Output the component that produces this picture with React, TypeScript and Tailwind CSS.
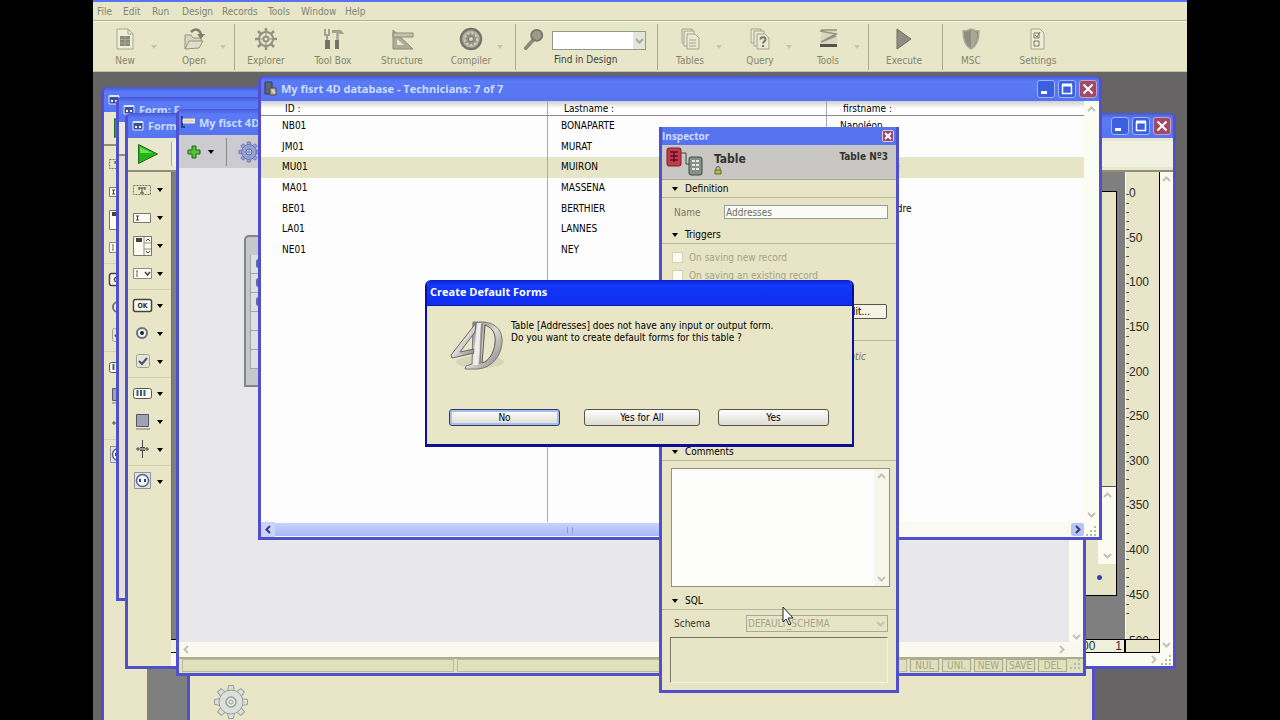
import type { ReactNode } from "react";
import clsx from "clsx";

const Caret = ({ className }: { className?: string }) => (
  <svg viewBox="0 0 6 4" className={clsx("h-[4px] w-[6px] shrink-0", className ?? "fill-black")}>
    <path d="M0 0H6L3 4Z" />
  </svg>
);

const Chevron = ({ dir, className }: { dir: "up" | "down" | "left" | "right"; className?: string }) => {
  const paths = {
    up: "M1 6L4.500 2.500L8 6",
    down: "M1 3L4.500 6.500L8 3",
    left: "M6 1L2.500 4.500L6 8",
    right: "M3 1L6.500 4.500L3 8"
  };
  return (
    <svg viewBox="0 0 9 9" className={clsx("size-[9px] shrink-0 fill-none stroke-2", className ?? "stroke-[#c3c4b0]")}>
      <path d={paths[dir]} />
    </svg>
  );
};

const Grip = () => (
  <svg viewBox="0 0 11 11" className="size-[11px] fill-[#bdbc9e]">
    <path d="M8 0h2v2h-2zM8 4h2v2h-2zM4 4h2v2h-2zM8 8h2v2h-2zM4 8h2v2h-2zM0 8h2v2h-2z" />
  </svg>
);

const teeth = [0, 45, 90, 135, 180, 225, 270, 315];

const Gear = ({ className, color, fill, hole }: { className: string; color: string; fill: string; hole: string }) => (
  <svg viewBox="0 0 36 36" className={className} fill={fill} stroke={color}>
    {teeth.map((angle) => (
      <path key={angle} d="M14.500 8L15.500 1.500h5L21.500 8z" transform={`rotate(${angle} 18 18)`} />
    ))}
    <circle cx="18" cy="18" r="12" />
    <circle cx="18" cy="18" r="10.500" stroke="none" />
    <circle cx="18" cy="18" r="5" fill={hole} strokeWidth="1.500" />
    <circle cx="18" cy="18" r="2" fill="none" />
  </svg>
);

/* ---------- main toolbar ---------- */

const toolIcons: Record<string, ReactNode> = {
  New: (
    <>
      <path d="M4 2h11l5 5v15H4z" fill="#eeeed8" stroke="#a8a88c" />
      <path d="M15 2v5h5" fill="none" stroke="#a8a88c" />
      <path d="M7 9h10v10H7z" fill="#8b8b7c" />
      <path d="M7 12.500h10M7 16h10M12 9v10" stroke="#a9a999" />
    </>
  ),
  Open: (
    <>
      <path d="M3 22V8h6l2 3h8v3" fill="#d5d4bd" stroke="#96957f" />
      <path d="M3 22l4-8h14l-4 7z" fill="#dfdec8" stroke="#96957f" />
      <path d="M9 5c4-4 9-3 10 3" fill="none" stroke="#7f7e70" strokeWidth="2.500" />
      <path d="M15 7h8l-4 5z" fill="#7f7e70" />
    </>
  ),
  Explorer: (
    <g fill="none" stroke="#929281">
      <circle cx="12" cy="12" r="7" strokeWidth="2" />
      <circle cx="12" cy="12" r="2.500" strokeWidth="2" />
      <path d="M12 5V1M12 23v-4M5 12H1M23 12h-4M7 7L4 4M20 20l-3-3M17 7l3-3M4 20l3-3" strokeWidth="2.500" />
      <path d="M12 5v5M12 14v5M5 12h5M14 12h5" />
    </g>
  ),
  "Tool Box": (
    <>
      <path d="M4 2v6h4V2M6 8v6" fill="none" stroke="#a3a28e" strokeWidth="2" />
      <path d="M4 13h5v9H4z" fill="#74746a" />
      <path d="M11 3h9l3 4h-4l-1-1h-7z" fill="#a3a28e" />
      <path d="M15 6h3v7h-3z" fill="#b0af9b" />
      <path d="M14 13h4v9h-4z" fill="#74746a" />
    </>
  ),
  Structure: (
    <>
      <path d="M3 3v19h20z" fill="#adac98" stroke="#8a8a79" />
      <path d="M7 12v6h7z" fill="#e8e7c9" />
      <path d="M3 6h20v4H3z" fill="#c4c3ac" stroke="#8a8a79" />
    </>
  ),
  Compiler: (
    <>
      <circle cx="12" cy="12" r="10" fill="#b3b2a0" stroke="#75756a" strokeWidth="2.500" />
      <circle cx="12" cy="12" r="6" fill="#94938a" stroke="#d3d2bd" strokeDasharray="2 2" strokeWidth="2" />
      <circle cx="12" cy="12" r="2.500" fill="#d9d8c4" stroke="#75756a" />
    </>
  ),
  Tables: (
    <g fill="#e9e8d3" stroke="#a6a58f">
      <path d="M4 2h10v14H4z" />
      <path d="M6 4h10v15H6z" />
      <path d="M9 7h8l4 4v11H9z" />
      <path d="M11 13h7M11 16h7M11 19h7" />
    </g>
  ),
  Query: (
    <>
      <g fill="#e9e8d3" stroke="#a6a58f">
        <path d="M3 2h10v14H3z" />
        <path d="M6 4h10v15H6z" />
        <path d="M9 7h8l4 4v11H9z" />
      </g>
      <path d="M12.500 12.500c0-3 5-3 5 0 0 2-2.500 2-2.500 4M15 18v2" fill="none" stroke="#77766a" strokeWidth="2" />
    </>
  ),
  Tools: (
    <>
      <path d="M6 3h15v14H4z" fill="#d8d7c1" />
      <path d="M4 4l16 3-15 8M5 3h16M5 15L20 9" fill="none" stroke="#96957f" strokeWidth="1.500" />
      <path d="M4 17h17v3H4z" fill="#55554d" />
    </>
  ),
  Execute: <path d="M5 2l14 10L5 22z" fill="#8f8e7e" stroke="#6c6c60" />,
  MSC: (
    <>
      <path d="M4 4c3 0 6-1 8-2 2 1 5 2 8 2 0 9-2 15-8 18C6 19 4 13 4 4z" fill="#8d8d80" stroke="#aead99" strokeWidth="1.500" />
      <path d="M12 3v18c4-3 6-8 6-15z" fill="#a9a897" />
    </>
  ),
  Settings: (
    <>
      <path d="M5 2h9l4 4v16H5z" fill="#eeeed8" stroke="#a6a58f" />
      <path d="M8 6h5v5H8zM8 14h5v5H8z" fill="none" stroke="#77766a" />
      <path d="M9 8l2 2 3-5" fill="none" stroke="#77766a" />
    </>
  )
};

const ToolButton = ({ label, className, menu }: { label: string; className: string; menu?: boolean }) => (
  <button className={clsx("flex shrink-0 items-center", className)}>
    <span className="flex w-[50px] flex-col items-center">
      <svg viewBox="0 0 24 24" className="size-6">
        {toolIcons[label]}
      </svg>
      <span className="mt-[3px] leading-[14px] whitespace-nowrap text-[#85856f]">{label}</span>
    </span>
    {menu && (
      <span className="flex w-2 justify-center">
        <Caret className="fill-[#c6c6ac]" />
      </span>
    )}
  </button>
);

const Divider = ({ className }: { className: string }) => (
  <div className={clsx("h-[46px] w-px shrink-0 bg-[#a9a98d]", className)} />
);

const menus = [
  ["File", "ml-[4px] w-[26px]"],
  ["Edit", "w-[29px]"],
  ["Run", "w-[30px]"],
  ["Design", "w-[40px]"],
  ["Records", "w-[46px]"],
  ["Tools", "w-[33px]"],
  ["Window", "w-[44px]"],
  ["Help", "w-[30px]"]
];

const AppHeader = () => (
  <header className="border-t-2 border-[#5a73ee] bg-[#e7e6c8]">
    <nav className="flex h-[19px] items-center border-b border-[#b0af96]">
      {menus.map(([name, width]) => (
        <button key={name} className={clsx("shrink-0 text-left text-[#83836f]", width)}>
          {name}
        </button>
      ))}
    </nav>
    <div className="flex h-[51px] items-center border-t border-[#f8f8e8] border-b border-b-[#c4c3aa] pt-px">
      <ToolButton label="New" className="ml-[7px]" menu />
      <ToolButton label="Open" className="ml-[11px]" menu />
      <Divider className="ml-[7px]" />
      <ToolButton label="Explorer" className="ml-[6px]" />
      <ToolButton label="Tool Box" className="ml-[17px]" />
      <ToolButton label="Structure" className="ml-[19px]" />
      <ToolButton label="Compiler" className="ml-[19px]" menu />
      <Divider className="ml-[11px]" />
      <label className="ml-[7px] flex shrink-0 items-start">
        <svg viewBox="0 0 24 24" className="size-[22px]">
          <path d="M11 13L3 22" stroke="#8a897b" strokeWidth="4" strokeLinecap="round" />
          <circle cx="15" cy="8" r="6" fill="#9c9b8c" stroke="#77766b" strokeWidth="2" />
        </svg>
        <span className="ml-[7px] flex w-[94px] flex-col pt-[3px]">
          <span className="flex h-[19px] w-full border border-[#8b9b8c] bg-white">
            <input className="min-w-0 flex-1 bg-transparent px-1 outline-none" />
            <span className="flex w-3 items-center justify-center bg-[#e4e6d8]">
              <Chevron dir="down" className="stroke-[#a9ad9c]" />
            </span>
          </span>
          <span className="mt-[3px] pl-[2px] leading-[14px] whitespace-nowrap text-[#41413a]">Find in Design</span>
        </span>
      </label>
      <Divider className="ml-[11px]" />
      <ToolButton label="Tables" className="ml-[7px]" menu />
      <ToolButton label="Query" className="ml-[12px]" menu />
      <ToolButton label="Tools" className="ml-[10px]" menu />
      <Divider className="ml-[7px]" />
      <ToolButton label="Execute" className="ml-[10px]" />
      <Divider className="ml-[13px]" />
      <ToolButton label="MSC" className="ml-[3px]" />
      <ToolButton label="Settings" className="ml-[17px]" />
    </div>
  </header>
);

/* ---------- windows ---------- */

const CaptionButtons = () => (
  <div className="ml-auto flex gap-[3px] pr-[2px]">
    <button aria-label="Minimize" className="size-[18px] rounded-[3px] border border-[#9db3fa] bg-[#3a5fe0]">
      <svg viewBox="0 0 16 16" className="size-4">
        <path d="M3 10h6v3H3z" fill="#fff" />
      </svg>
    </button>
    <button aria-label="Maximize" className="size-[18px] rounded-[3px] border border-[#9db3fa] bg-[#3a5fe0]">
      <svg viewBox="0 0 16 16" className="size-4 fill-none stroke-white">
        <path d="M3.500 4v8.500h9V4M3 4h10" strokeWidth="1.500" />
        <path d="M3 4h10" strokeWidth="3" />
      </svg>
    </button>
    <button aria-label="Close" className="size-[18px] rounded-[3px] border border-[#c9a0c4] bg-[#a04a66]">
      <svg viewBox="0 0 16 16" className="size-4 stroke-white">
        <path d="M3.500 3.500l9 9M12.500 3.500l-9 9" strokeWidth="2" />
      </svg>
    </button>
  </div>
);

const Win = ({
  title,
  icon,
  buttons,
  titleHeight,
  className,
  children
}: {
  title?: string;
  icon?: ReactNode;
  buttons?: boolean;
  titleHeight: string;
  className: string;
  children?: ReactNode;
}) => (
  <section className={clsx("absolute flex flex-col overflow-hidden rounded-t-[6px] border-x-3 border-b-3 border-[#5150cc]", className)}>
    <div
      className={clsx(
        "flex shrink-0 items-center gap-[4px] bg-linear-to-b from-[#4558d6] via-[#5b7af5] via-20% to-[#5674f0]",
        titleHeight
      )}
    >
      {icon}
      {title && (
        <h2 className="text-[11px] leading-none font-bold whitespace-nowrap text-[#cbdcff] font-['Open_Sans',sans-serif]">{title}</h2>
      )}
      {buttons && <CaptionButtons />}
    </div>
    {children}
  </section>
);

const FormIcon = () => (
  <svg viewBox="0 0 12 10" className="ml-[4px] h-[10px] w-[12px] shrink-0">
    <path d="M1 1h10v8H1z" fill="#3c50a0" stroke="#d9e4ff" />
    <path d="M1 1h10" stroke="#d9e4ff" strokeWidth="2" />
    <path d="M3 5h2v2H3zM7 5h2v2H7z" fill="#fff" />
  </svg>
);

const paletteGroups: { name: string; icon: ReactNode }[][] = [
  [
    {
      name: "Text",
      icon: (
        <>
          <path d="M1.500 6.500h17v9h-17z" fill="none" stroke="#77766a" strokeDasharray="2 1" />
          <path d="M7 9h6M10 9v5M8 14h4M7 8v3M13 8v3" fill="none" stroke="#44443d" />
        </>
      )
    },
    {
      name: "Input",
      icon: (
        <>
          <path d="M1.500 6.500h17v9h-17z" fill="#fbfbf3" stroke="#77766a" />
          <path d="M4 9h3M5.500 9v4M4 13h3" stroke="#44443d" />
        </>
      )
    },
    {
      name: "List box",
      icon: (
        <>
          <path d="M1.500 1.500h18v19h-18z" fill="#fbfbf3" stroke="#77766a" />
          <path d="M4 3h6v4H4z" fill="#44443d" />
          <path d="M12 2v18M12 8h7M12 14h7" stroke="#8d8d7d" />
          <path d="M14 6l2-2 2 2M14 16l2 2 2-2" fill="none" stroke="#44443d" />
        </>
      )
    },
    {
      name: "Combo box",
      icon: (
        <>
          <path d="M1.500 5.500h18v10h-18z" fill="#fbfbf3" stroke="#8d8d7d" />
          <path d="M4 8h2M5 8v5M4 13h2" stroke="#77766a" />
          <path d="M13 9l2.500 3L18 9" fill="none" stroke="#44443d" strokeWidth="1.500" />
        </>
      )
    }
  ],
  [
    {
      name: "Button",
      icon: (
        <>
          <rect x="1.500" y="4.500" width="18" height="12" rx="2" fill="#fbfbf3" stroke="#44443d" strokeWidth="1.500" />
          <text x="10.500" y="13" textAnchor="middle" fontSize="7" fontWeight="bold" fill="#333">
            OK
          </text>
        </>
      )
    },
    {
      name: "Radio button",
      icon: (
        <>
          <circle cx="10" cy="10" r="5" fill="#f2f4f2" stroke="#69717c" strokeWidth="2" />
          <circle cx="10" cy="10" r="2" fill="#26282e" />
        </>
      )
    },
    {
      name: "Check box",
      icon: (
        <>
          <rect x="4.500" y="3.500" width="13" height="13" rx="2" fill="#e4e5d9" stroke="#a0a08f" />
          <path d="M7 10l3 3 5-6" fill="none" stroke="#4b5060" strokeWidth="2" />
        </>
      )
    }
  ],
  [
    {
      name: "Progress",
      icon: (
        <>
          <rect x="1.500" y="5.500" width="18" height="10" rx="2" fill="#fbfbf3" stroke="#55554c" />
          <path d="M5.500 7v6M9 7v6M12.500 7v6" stroke="#3d6176" strokeWidth="2" />
        </>
      )
    },
    {
      name: "Rectangle",
      icon: (
        <>
          <path d="M4.500 3.500h12v12h-12z" fill="#9ea3b4" stroke="#55576a" />
          <path d="M4 18h14" stroke="#77766a" />
        </>
      )
    },
    {
      name: "Splitter",
      icon: <path d="M4 10h13M6 8v4M15 8v4M10.500 1v7M10.500 12v7M8 8.500h5M8 11.500h5" stroke="#4b4b44" />
    }
  ],
  [
    {
      name: "Plug-in",
      icon: (
        <>
          <path d="M2.500 1.500h16v16h-16z" fill="#dfe3e4" stroke="#8f93a0" />
          <circle cx="10.500" cy="9.500" r="6" fill="#f4f7ff" stroke="#56618c" strokeWidth="1.500" />
          <path d="M8 8v3M13 8v3" stroke="#39425f" strokeWidth="2" />
        </>
      )
    }
  ]
];

const Palette = () => (
  <div className="flex w-[43px] shrink-0 flex-col divide-y divide-[#d3d2b4] bg-[#e8e6c6] pt-[2px]">
    {paletteGroups.map((group) => (
      <div key={group[0].name} className="pt-[2px] pb-px">
        {group.map((tool) => (
          <button key={tool.name} aria-label={tool.name} className="flex h-[28px] w-full items-center gap-[4px] pl-[4px]">
            <svg viewBox="0 0 21 22" className="h-[22px] w-[21px]">
              {tool.icon}
            </svg>
            <Caret />
          </button>
        ))}
      </div>
    ))}
  </div>
);

const FormToolbar = () => (
  <div className="flex h-[34px] shrink-0 items-center border-b-2 border-[#8f8e78] bg-[#e9e8cf]">
    <button aria-label="Run form" className="ml-[9px]">
      <svg viewBox="0 0 22 22" className="size-[22px]">
        <path d="M1.500 1.500l19 9.500-19 9.500z" fill="#27b21c" stroke="#1d6d16" />
        <path d="M3 4l12 6H3z" fill="#6be253" />
      </svg>
    </button>
    <div className="ml-[12px] h-[26px] flex-1 rounded-l-[3px] border-l border-[#a9a98d] bg-[#f1f1e2]" />
  </div>
);

const ruler = [0, 50, 100, 150, 200, 250, 300, 350, 400, 450];

const Ruler = () => (
  <div className="flex w-[35px] shrink-0 flex-col overflow-hidden border-x border-black border-l-white bg-[#e8e5c8] font-['Liberation_Sans',sans-serif] text-[12px] text-[#2c2c28]">
    <div className="flex h-[446px] shrink-0 flex-col">
      {ruler.map((mark) => (
        <div key={mark} className="relative flex flex-1 items-center pb-[2px]">
          <div className="absolute inset-y-0 left-0 flex w-[3px] flex-col justify-around">
            {[0, 1, 2, 3, 4].map((n) => (
              <span key={n} className={clsx("h-px bg-[#55554c]", mark === 0 && n < 2 && "invisible")} />
            ))}
          </div>
          <span className="pl-[3px]">{mark}</span>
        </div>
      ))}
    </div>
    <span className="pt-[16px] pl-[3px] leading-[14px]">500</span>
  </div>
);

const FormWindow = () => (
  <Win
    title="Form:"
    icon={<FormIcon />}
    buttons
    titleHeight="h-[25px]"
    className="top-[41px] left-[32px] h-[556px] w-[1051px]"
  >
    <FormToolbar />
    <div className="flex min-h-0 flex-1">
      <Palette />
      <div className="flex min-w-0 flex-1 flex-col">
        <div className="flex min-h-0 flex-1">
          <div className="flex-1 border-l border-[#6c6c6c] bg-[#7f7f7f] pt-[19px] pr-[8px] pl-[20px]">
            <div className="flex h-[405px] flex-col items-end border border-black bg-[#e6e5c8]">
              <div className="mt-[294px] flex h-[78px] w-full flex-col items-end justify-between border-t border-[#55554c] bg-[#e6e5c8]">
                <div className="flex h-full w-[18px] flex-col items-center justify-between bg-[#fbfbf2] py-[4px]">
                  <Chevron dir="up" />
                  <Chevron dir="down" />
                </div>
              </div>
              <div className="mt-[11px] mr-[14px] size-[5px] rounded-full bg-[#3a3fae]" />
            </div>
          </div>
          <Ruler />
        </div>
        <div className="flex h-[14px] shrink-0 items-center justify-end border border-black border-l-0 bg-[#f0efdc] font-['Liberation_Sans',sans-serif] text-[12px] leading-none text-[#2c2c28]">
          <span>100</span>
          <span className="mr-[2px] ml-[20px]">1</span>
          <div className="h-full w-[35px] border-l-2 border-black bg-[#e8e5c8]" />
        </div>
        <div className="flex h-[13px] shrink-0 items-center justify-end bg-[#fbfbf2] pr-[2px]">
          <Chevron dir="right" />
        </div>
      </div>
      <div className="flex w-[13px] shrink-0 flex-col items-center bg-[#fbfbf2] pt-[3px]">
        <Chevron dir="up" />
        <Chevron dir="down" className="mt-auto mb-[6px] stroke-[#c3c4b0]" />
        <Grip />
      </div>
    </div>
  </Win>
);

const StructureWindow = () => (
  <Win
    title="My fisct 4D"
    icon={
      <svg viewBox="0 0 14 14" className="ml-[2px] size-[14px] shrink-0">
        <path d="M1 1v11h3" fill="none" stroke="#2b3c90" strokeWidth="2" />
        <path d="M2 4h12v4H2z" fill="#e6d9a0" stroke="#fff" strokeWidth=".8" />
      </svg>
    }
    titleHeight="h-[26px]"
    className="top-[37px] left-[83px] h-[567px] w-[910px]"
  >
    <div className="flex h-[33px] shrink-0 items-center bg-[#cccbcf]">
      <button aria-label="Add" className="ml-[8px] flex items-center gap-[7px]">
        <svg viewBox="0 0 14 14" className="size-[14px]">
          <path d="M5 1h4v4h4v4H9v4H5V9H1V5h4z" fill="#4fc23a" stroke="#22661a" />
        </svg>
        <Caret />
      </button>
      <div className="ml-[12px] h-[28px] w-px bg-[#85858a]" />
      <button aria-label="Options" className="ml-[11px]">
        <Gear className="size-[22px]" color="#4f5da6" fill="#98a2d4" hole="#cccbcf" />
      </button>
    </div>
    <div className="flex min-h-0 flex-1 bg-[#e8e8eb]">
      <div className="min-w-0 flex-1 pt-[67px] pl-[65px]">
        <div className="flex h-[152px] w-[120px] flex-col rounded-tl-[5px] border-2 border-[#858585] bg-[#c6c7c9] pt-[18px] pb-[16px] pl-[4px]">
          {[0, 1, 2, 3, 4, 5].map((n) => (
            <div key={n} className="flex-1 border-b border-l border-[#a3a3a6] bg-[#dfe0e2] pt-[4px] pl-[5px]">
              {n < 3 && <div className="h-[9px] w-[5px] rounded bg-[#5c6ea8]" />}
            </div>
          ))}
        </div>
      </div>
      <div className="flex w-[14px] shrink-0 flex-col items-center justify-end bg-[#fbfbf4] pb-px">
        <Chevron dir="down" />
      </div>
    </div>
    <div className="flex h-[15px] shrink-0 items-center justify-between bg-[#faf9f0] pr-[17px] pl-[3px]">
      <Chevron dir="left" />
      <Chevron dir="right" />
    </div>
    <footer className="flex h-[16px] shrink-0 items-stretch gap-[3px] border-t-2 border-[#adad92] bg-[#dfe0bd] pr-[2px] pb-px pl-[3px] leading-[11px] text-[#a5a688]">
      <div className="w-[272px] border border-[#bcbc9d]" />
      <div className="flex-1 border border-[#bcbc9d]" />
      {["NUL", "UNI.", "NEW", "SAVE", "DEL"].map((key) => (
        <div key={key} className="w-[29px] border border-[#a9aa8b] text-center">
          {key}
        </div>
      ))}
      <Grip />
    </footer>
  </Win>
);

const technicians = [
  ["NB01", "BONAPARTE", "Napoléon"],
  ["JM01", "MURAT", "Joachim"],
  ["MU01", "MUIRON", "Jean-Baptiste"],
  ["MA01", "MASSENA", "André"],
  ["BE01", "BERTHIER", "Louis-Alexandre"],
  ["LA01", "LANNES", "Jean"],
  ["NE01", "NEY", "Michel"]
];

const TechniciansWindow = () => (
  <Win
    title="My fisrt 4D database - Technicians: 7 of 7"
    icon={
      <svg viewBox="0 0 14 16" className="ml-[2px] h-4 w-[14px] shrink-0">
        <path d="M2 1h7v12H2z" fill="#5f6672" stroke="#333a52" />
        <path d="M7 7h6v7H7z" fill="#b5b0a0" stroke="#4b4b48" />
        <path d="M9 9l3 3" stroke="#e9d9a0" strokeWidth="2" />
      </svg>
    }
    buttons
    titleHeight="h-[25px]"
    className="top-[4px] left-[165px] h-[464px] w-[844px]"
  >
    <div className="flex min-h-0 flex-1 bg-[#fdfdfd]">
      <div className="flex min-w-0 flex-1 flex-col">
        <table className="h-[159px] w-full shrink-0 table-fixed border-separate border-spacing-0 text-left text-black">
          <colgroup>
            <col className="w-[287px]" />
            <col className="w-[279px]" />
            <col />
          </colgroup>
          <thead>
            <tr className="h-[15px] bg-linear-to-b from-[#cfcfcf] to-white to-50% leading-[13px] *:border-b *:border-b-[#8b8b88]">
              <th className="border-r border-r-[#a9a9a9] pl-[24px] font-normal">ID :</th>
              <th className="border-r border-r-[#a9a9a9] pl-[16px] font-normal">Lastname :</th>
              <th className="pl-[16px] font-normal">firstname :</th>
            </tr>
          </thead>
          <tbody>
            {technicians.map(([id, lastname, firstname]) => (
              <tr key={id} className={clsx("leading-[14px]", id === "MU01" && "bg-[#e6e6c6]")}>
                <td className="border-r border-[#a9a9a9] pl-[21px]">{id}</td>
                <td className="border-r border-[#a9a9a9] pl-[13px]">{lastname}</td>
                <td className="pl-[13px]">{firstname}</td>
              </tr>
            ))}
          </tbody>
        </table>
        <div className="flex flex-1">
          <div className="w-[287px] border-r border-[#a9a9a9]" />
          <div className="w-[279px] border-r border-[#a9a9a9]" />
        </div>
        <div className="flex h-[15px] shrink-0 items-center bg-[#fafaf5]">
          <span className="flex h-full w-[14px] items-center justify-center bg-[#c9d3fb]">
            <Chevron dir="left" className="stroke-[#333f70]" />
          </span>
          <div className="flex h-[13px] w-[590px] items-center justify-center bg-linear-to-b from-[#c6d2ff] to-[#a9b8f8]">
            <span className="h-[6px] w-[6px] border-x border-[#8598dd]" />
          </div>
          <span className="ml-auto flex h-[13px] w-[13px] items-center justify-center rounded-[2px] bg-[#b6c4fb]">
            <Chevron dir="right" className="stroke-[#333f70]" />
          </span>
        </div>
      </div>
      <div className="flex w-[15px] shrink-0 flex-col items-center bg-[#fbfcf2] pt-[4px]">
        <Chevron dir="up" />
        <Chevron dir="down" className="mt-auto mb-[7px] stroke-[#c3c4b0]" />
        <Grip />
      </div>
    </div>
  </Win>
);

/* ---------- inspector ---------- */

const SectionTitle = ({ children, className }: { children: ReactNode; className?: string }) => (
  <h3 className={clsx("flex h-[18px] shrink-0 items-center gap-[7px] border-b border-[#b9b899] pl-[10px] text-black", className)}>
    <Caret />
    {children}
  </h3>
);

const Inspector = () => (
  <section className="absolute top-[55px] left-[566px] flex h-[566px] w-[240px] flex-col border-3 border-t-0 border-[#5150cc] bg-[#e7e5c6]">
    <div className="flex h-[18px] shrink-0 items-center justify-between bg-[#5674f0] pr-[2px]">
      <h2 className="text-[10px] font-bold text-[#cbdcff] font-['Open_Sans',sans-serif]">Inspector</h2>
      <button aria-label="Close inspector" className="size-[12px] rounded-[2px] border border-[#e3c9dd] bg-[#98486a]">
        <svg viewBox="0 0 10 10" className="size-[10px] stroke-white">
          <path d="M2 2l6 6M8 2l-6 6" strokeWidth="2" />
        </svg>
      </button>
    </div>
    <div className="flex h-[35px] shrink-0 border-b border-[#a4a498] bg-[#c8c7c3]">
      <svg viewBox="0 0 40 32" className="mt-[2px] ml-[3px] h-8 w-10">
        <path d="M16 6h5v11h4" fill="none" stroke="#44443d" />
        <rect x="2" y="1" width="14" height="18" rx="2" fill="#c23a4c" stroke="#7c1a2a" />
        <path d="M5 5h8M5 9h8M5 13h8M9 5v10" stroke="#5c1220" strokeWidth="1.500" />
        <rect x="24" y="10" width="13" height="18" rx="2" fill="#84918a" stroke="#3f4a44" />
        <path d="M27 14h7M27 18h7M27 22h7" stroke="#e1e9e2" strokeWidth="2" strokeDasharray="3 1" />
      </svg>
      <div className="mt-[7px] ml-[9px]">
        <h2 className="text-[12px] leading-[14px] font-bold text-[#33332e]">Table</h2>
        <svg viewBox="0 0 8 9" className="h-[9px] w-2">
          <path d="M2 4V2.500a2 2 0 014 0V4" fill="none" stroke="#5c6a1c" />
          <path d="M1 4h6v4H1z" fill="#b5c04c" stroke="#5c6a1c" />
        </svg>
      </div>
      <strong className="mt-[5px] mr-[8px] ml-auto leading-[14px] text-[#33332e]">Table Nº3</strong>
    </div>
    <SectionTitle>Definition</SectionTitle>
    <label className="flex h-[28px] shrink-0 items-center pr-[8px] pl-[12px] text-[#77766a]">
      <span className="w-[50px]">Name</span>
      <input defaultValue="Addresses" className="h-[14px] min-w-0 flex-1 border border-[#8fa0a0] bg-[#fbfbf6] px-px text-[#6c6c66]" />
    </label>
    <SectionTitle>Triggers</SectionTitle>
    <div className="flex h-[97px] shrink-0 flex-col border-b border-[#b9b899] pt-[4px] pr-[9px] pl-[10px] text-[#a5a487]">
      {["On saving new record", "On saving an existing record"].map((label) => (
        <label key={label} className="flex h-[18px] items-center gap-[6px]">
          <input type="checkbox" disabled className="size-[11px] appearance-none border border-[#d3d2b4] bg-[#fbfbf0]" />
          {label}
        </label>
      ))}
      <button className="mt-[20px] h-[15px] w-[60px] self-end rounded-[2px] border border-[#55554c] bg-[#f4f3e4] pr-4 text-right leading-[13px] text-black">
        Edit...
      </button>
    </div>
    <p className="flex-1 pt-[8px] pr-[30px] text-right text-[#77766a] italic">Automatic</p>
    <SectionTitle>Comments</SectionTitle>
    <div className="mt-[7px] mr-[6px] ml-[9px] flex h-[119px] shrink-0 border border-[#8b9488] bg-[#fcfcfa]">
      <textarea aria-label="Comments" className="min-w-0 flex-1 resize-none outline-none" />
      <div className="flex w-[15px] flex-col items-center justify-between bg-[#f6f6ec] py-[3px]">
        <Chevron dir="up" />
        <Chevron dir="down" />
      </div>
    </div>
    <SectionTitle className="mt-[5px]">SQL</SectionTitle>
    <label className="flex h-[27px] shrink-0 items-center pr-[8px] pl-[12px] text-[#33332e]">
      <span className="w-[72px]">Schema</span>
      <span className="flex h-[17px] flex-1 items-center border border-[#a3ab9c] pr-[2px]">
        <select disabled className="h-full min-w-0 flex-1 appearance-none pl-px leading-[15px] text-[#a5a487] opacity-100">
          <option>DEFAULT_SCHEMA</option>
        </select>
        <Chevron dir="down" />
      </span>
    </label>
    <div className="mx-[8px] mb-[7px] h-[46px] shrink-0 border border-[#f4f4e2] border-t-[#77766a] border-l-[#77766a]" />
  </section>
);

/* ---------- dialog ---------- */

const Logo4D = () => (
  <svg viewBox="0 0 56 54" className="h-[54px] w-[56px] shrink-0">
    <defs>
      <linearGradient id="metal" x1="0" y1="0" x2="1" y2="1">
        <stop offset="0" stopColor="#6e6a68" />
        <stop offset=".5" stopColor="#dedad6" />
        <stop offset="1" stopColor="#7d7977" />
      </linearGradient>
    </defs>
    <ellipse cx="30" cy="43" rx="24" ry="6" fill="#d6d4bb" />
    <path d="M23 3h11c13 1 19 10 18 21-1 14-11 25-24 26H15l1-3 6-2z" fill="url(#metal)" stroke="#7d7977" />
    <path d="M35 6c8 3 11 9 10 18-1 10-6 18-13 20z" fill="#e8e6cb" stroke="#5b5755" />
    <path d="M26 4L1 36l1 3 22-5v-4l-14 3L25 13z" fill="url(#metal)" stroke="#6b6765" />
    <path d="M27 4h4l-3 42h-5z" fill="#efedea" />
    <path d="M32 5l-2 40" stroke="#8b8785" strokeWidth="1.500" />
  </svg>
);

const DialogButton = ({ label, className, focused }: { label: string; className: string; focused?: boolean }) => (
  <button
    className={clsx(
      "h-[17px] rounded-[3px] border bg-linear-to-b from-white to-[#dddcd0] leading-[14px] text-black",
      focused ? "border-[#2c3866] inset-ring-2 inset-ring-[#a9bdf0]" : "border-[#55554c]",
      className
    )}
  >
    {label}
  </button>
);

const DefaultFormsDialog = () => (
  <section
    role="dialog"
    aria-labelledby="dialog-title"
    className="absolute top-[208px] left-[332px] flex h-[167px] w-[429px] flex-col overflow-hidden rounded-t-[6px] border-x-2 border-b-3 border-[#0d0f98] bg-[#e8e6c6]"
  >
    <div className="flex h-[26px] shrink-0 items-center border-b border-[#0d1cb4] bg-linear-to-b from-[#0c22c8] via-[#1238fa] via-20% to-[#0f2df0] pl-[3px]">
      <h2 id="dialog-title" className="text-[11px] font-bold text-white font-['Open_Sans',sans-serif]">
        Create Default Forms
      </h2>
    </div>
    <div className="flex flex-1 pt-[13px] pl-[23px]">
      <Logo4D />
      <p className="ml-[5px] pt-px leading-[12px] whitespace-nowrap text-black">
        Table [Addresses] does not have any input or output form.
        <br />
        Do you want to create default forms for this table ?
      </p>
    </div>
    <div className="flex shrink-0 px-[22px] pb-[18px]">
      <DialogButton label="No" className="w-[111px]" focused />
      <DialogButton label="Yes for All" className="ml-[24px] w-[116px]" />
      <DialogButton label="Yes" className="ml-[18px] w-[111px]" />
    </div>
  </section>
);

export default function App() {
  return (
    <div className="h-screen overflow-hidden bg-black px-[93px] font-['DejaVu_Sans_Condensed','DejaVu_Sans',sans-serif] text-[10px]">
      <div className="flex h-full flex-col">
        <AppHeader />
        <main className="relative flex-1 overflow-hidden bg-[#666465]">
          <Win icon={<FormIcon />} titleHeight="h-[25px]" className="top-[15px] left-[8px] h-[700px] w-[900px]">
            <FormToolbar />
            <div className="flex flex-1 bg-[#7f7f7f]">
              <Palette />
            </div>
          </Win>
          <Win title="Form: F" icon={<FormIcon />} titleHeight="h-[25px]" className="top-[25px] left-[23px] h-[504px] w-[900px]">
            <div className="h-[34px] shrink-0 border-b-2 border-[#8f8e78] bg-[#ebeade]" />
            <div className="flex-1 bg-[#e3e0dc]" />
          </Win>
          <Win titleHeight="h-[25px]" className="top-[400px] left-[94px] h-[400px] w-[908px]">
            <div className="flex-1 bg-[#e8e6c6] pt-[187px] pl-[23px]">
              <Gear className="size-[36px]" color="#96a09b" fill="#dbe0da" hole="#e4e8e0" />
            </div>
          </Win>
          <FormWindow />
          <StructureWindow />
          <TechniciansWindow />
          <Inspector />
          <DefaultFormsDialog />
          <svg viewBox="0 0 12 20" className="absolute top-[534px] left-[689px] h-5 w-3">
            <path d="M1 1v15l3-3 3 6 2-1-3-6h5z" fill="#fff" stroke="#222" />
          </svg>
        </main>
      </div>
    </div>
  );
}
